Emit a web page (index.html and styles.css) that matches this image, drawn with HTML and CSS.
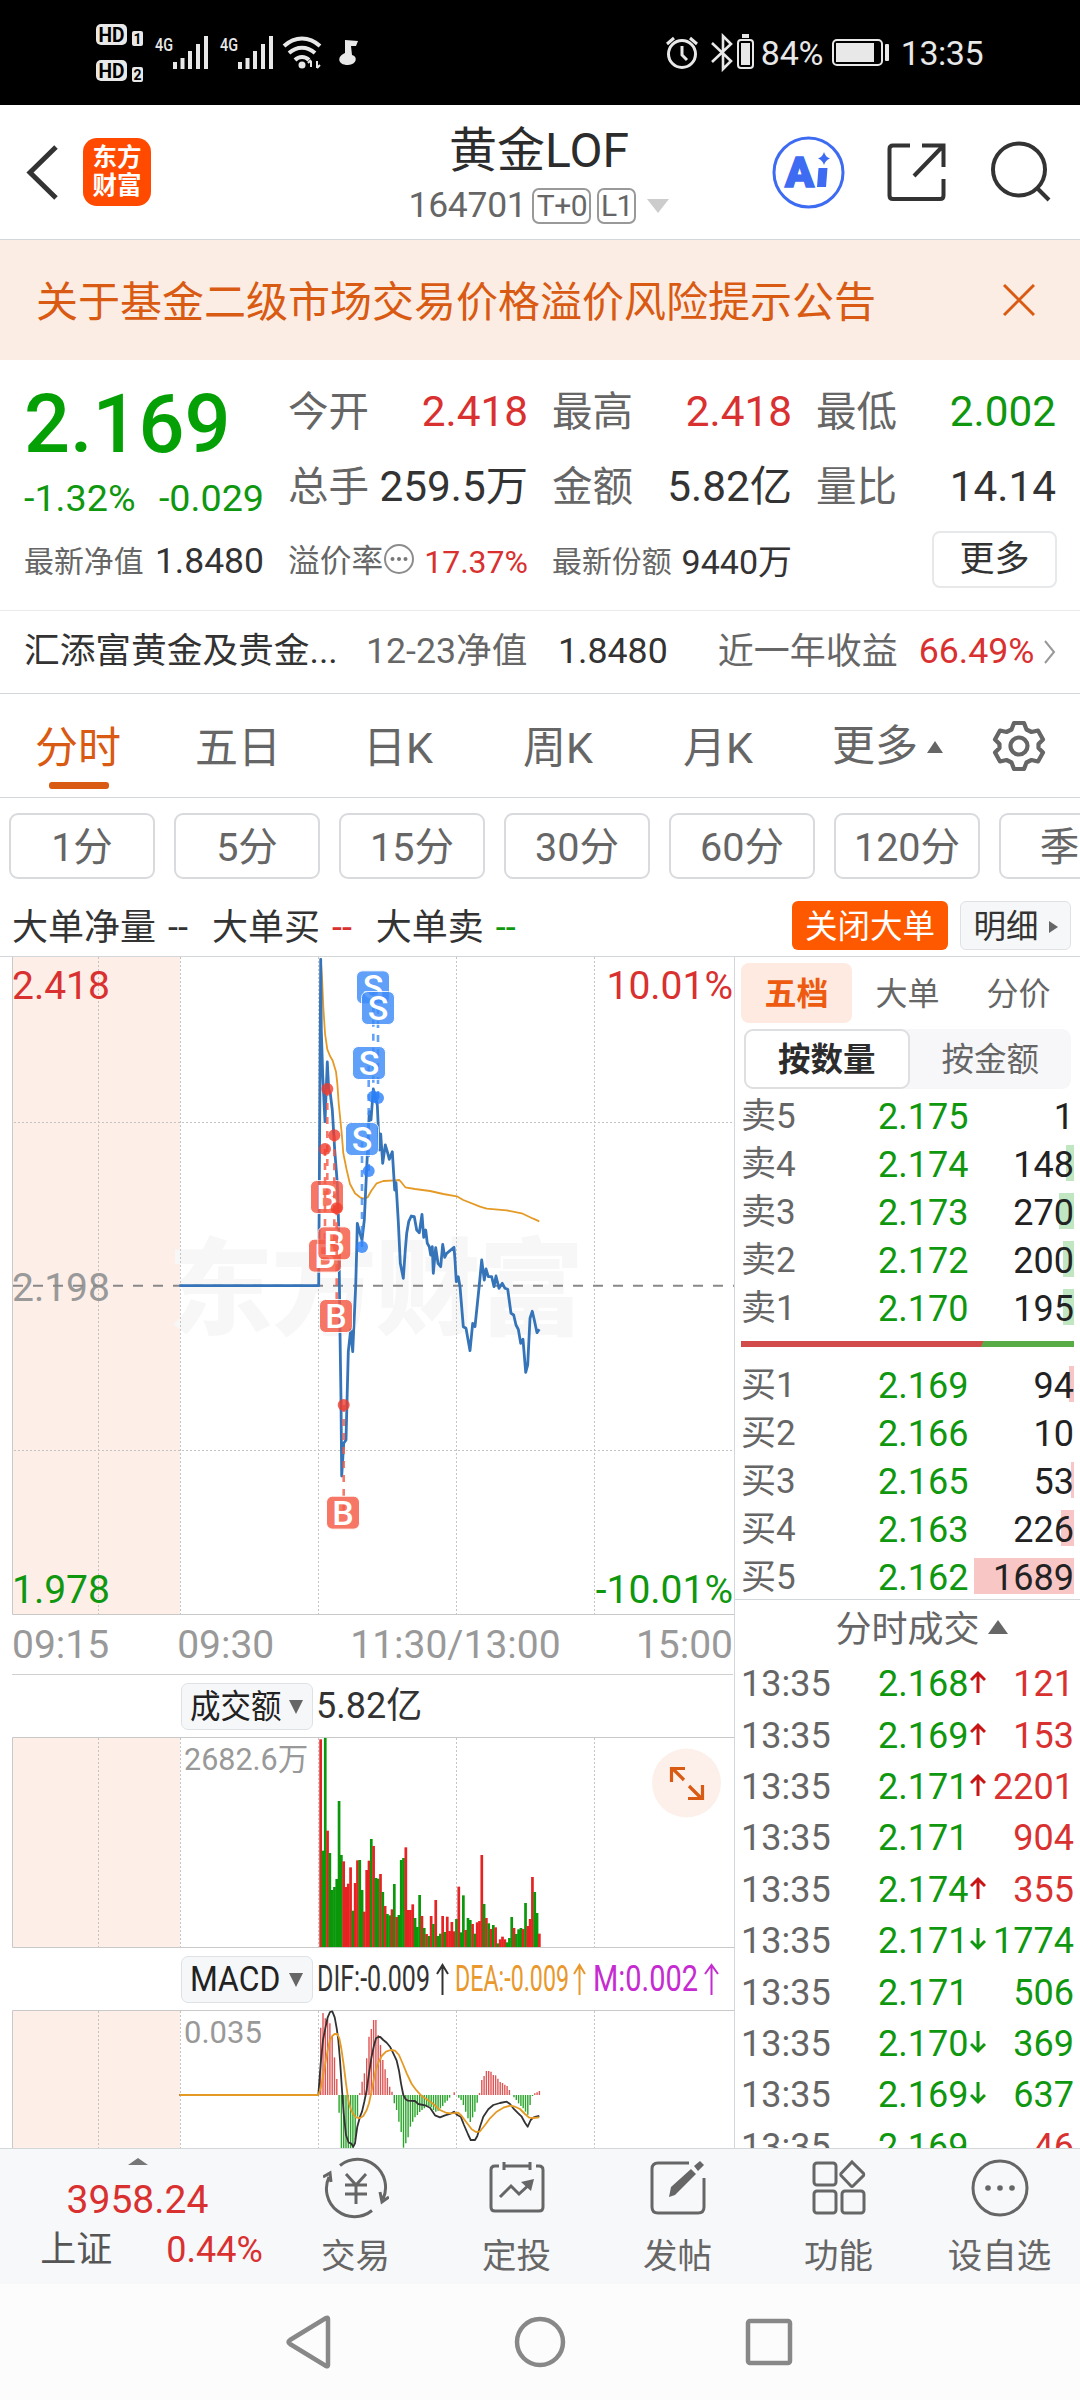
FILE: index.html
```html
<!DOCTYPE html>
<html lang="zh-CN">
<head>
<meta charset="utf-8">
<title>黄金LOF 164701</title>
<link rel="stylesheet" href="styles.css">
</head>
<body>
<div class="status">
  <svg class="status-left" width="280" height="64" viewBox="90 20 280 64">
    <g fill="#e8e8e8">
      <rect x="96" y="24" width="31" height="21" rx="5"/><rect x="96" y="60" width="31" height="21" rx="5"/>
      <rect x="132" y="31" width="11" height="15" rx="2"/><rect x="132" y="67" width="11" height="15" rx="2"/>
      <g id="sig"><rect x="173" y="62" width="4" height="7"/><rect x="180.500" y="58" width="4" height="11"/><rect x="188" y="51" width="4" height="18"/><rect x="196" y="44" width="4" height="25"/><rect x="204" y="36" width="4" height="33"/></g>
      <use href="#sig" x="65"/>
      <text x="155" y="51" font-size="19" font-weight="500" textLength="18" lengthAdjust="spacingAndGlyphs">4G</text>
      <text x="220" y="51" font-size="19" font-weight="500" textLength="18" lengthAdjust="spacingAndGlyphs">4G</text>
      <circle cx="302" cy="65" r="3.500"/>
      <path d="M311 61v6M308 63l3-3M317 61v7m0 0l3-3" stroke="#e8e8e8" stroke-width="2"/>
      <path d="M345 40l13 1-2 5h-5l1 9c6 1 5 10-4 10-11 0-11-9-3-12z"/>
    </g>
    <g font-size="20" font-weight="700" fill="#000"><text x="98.500" y="41.500" textLength="26" lengthAdjust="spacingAndGlyphs">HD</text><text x="98.500" y="77.500" textLength="26" lengthAdjust="spacingAndGlyphs">HD</text></g>
    <g font-size="14" font-weight="700" fill="#000"><text x="133.500" y="43.500">1</text><text x="133.500" y="79.500">2</text></g>
    <path d="M284 46c11-10 25-10 36 0M289 53c8-7 18-7 26 0M295 60c4-4 10-4 14 0" fill="none" stroke="#e8e8e8" stroke-width="4"/>
  </svg>
  <div class="status-right">
    <svg width="92" height="40" viewBox="664 33 92 40" fill="none" stroke="#e8e8e8" stroke-width="3">
      <circle cx="681" cy="54" r="13.500"/><path d="M681 46v9l5 5M666 44l7-6M696 44l-7-6"/>
      <path d="M711 43l19 18-8 8V36l8 8-19 18" stroke-width="2.600"/>
      <path d="M741 36h7" stroke-width="4"/><rect x="737" y="40" width="15" height="28" rx="3" stroke-width="2"/><rect x="740" y="43" width="9" height="22" fill="#e8e8e8" stroke="none"/>
    </svg>
    <span class="pct">84%</span>
    <svg width="60" height="28" viewBox="831 39 60 28"><rect x="833" y="40" width="49" height="25" rx="4" fill="none" stroke="#e8e8e8" stroke-width="2"/><rect x="836" y="43" width="38" height="19" fill="#e8e8e8"/><rect x="885" y="44" width="4" height="17" rx="1" fill="#e8e8e8"/></svg>
    <span class="clock">13:35</span>
  </div>
</div>

<header class="header">
  <div class="head-side">
    <svg width="40" height="60" viewBox="22 142 40 60" fill="none" stroke="#333" stroke-width="5"><path d="M56 147L30 172.500L56 198"/></svg>
    <div class="logo"><span>东方</span><span>财富</span></div>
  </div>
  <div class="head-title">
    <div class="name">黄金LOF</div>
    <div class="code"><span>164701</span><b class="tag">T+0</b><b class="tag level">L1</b><i class="tri-down light"></i></div>
  </div>
  <svg class="head-icons" width="286" height="76" viewBox="770 134 286 76" fill="none">
    <circle cx="808.500" cy="172.500" r="34.500" stroke="#3d6bf2" stroke-width="3"/>
    <text x="785" y="187" font-size="42" font-weight="900" fill="#3d6bf2" stroke="#3d6bf2" stroke-width="1.500" textLength="29" lengthAdjust="spacingAndGlyphs">A</text>
    <path d="M818.500 168h9l-1.500 19h-9z" fill="#3d6bf2"/><path d="M824 152q1.500 5 6 6.500q-4.500 1.500-6 6.500q-1.500-5-6-6.500q4.500-1.500 6-6.500z" fill="#3d6bf2"/>
    <g stroke="#333" stroke-width="4"><path d="M910 145.500H893Q889.500 145.500 889.500 149V195.500Q889.500 199 893 199H940Q943.500 199 943.500 195.500V179" /><path d="M914 176L943 146M922 145.500H943.500V167"/><circle cx="1019" cy="169.500" r="26"/><path d="M1037 188L1049 200"/></g>
  </svg>
</header>

<div class="notice"><span>关于基金二级市场交易价格溢价风险提示公告</span>
  <svg width="32" height="32" viewBox="0 0 32 32" stroke="#d95a12" stroke-width="3"><path d="M1 1L31 31M31 1L1 31"/></svg></div>

<section class="quote">
  <div class="q-main">
    <div class="last">2.169</div>
    <div class="change"><span>-1.32%</span><span>-0.029</span></div>
  </div>
  <div class="cell"><span>今开</span><b class="red">2.418</b></div>
  <div class="cell"><span>最高</span><b class="red">2.418</b></div>
  <div class="cell"><span>最低</span><b class="green">2.002</b></div>
  <div class="cell"><span>总手</span><b>259.5万</b></div>
  <div class="cell"><span>金额</span><b>5.82亿</b></div>
  <div class="cell"><span>量比</span><b>14.14</b></div>
  <div class="cell small"><span>最新净值</span><b>1.8480</b></div>
  <div class="cell small"><span class="rate">溢价率<svg width="32" height="32" viewBox="0 0 32 32"><circle cx="16" cy="16" r="14" fill="none" stroke="#8c8c8c" stroke-width="2"/><g fill="#777"><circle cx="9.500" cy="16" r="2"/><circle cx="16" cy="16" r="2"/><circle cx="22.500" cy="16" r="2"/></g></svg></span><b class="red prem">17.37%</b></div>
  <div class="cell small"><span>最新份额</span><b class="share">9440万</b></div>
  <div class="cell end"><button class="more">更多</button></div>
</section>

<section class="fund">
  <span class="f-name">汇添富黄金及贵金...</span><span class="f-lab">12-23净值</span><b>1.8480</b><span class="f-year">近一年收益</span><b class="red f-pct">66.49%</b>
  <svg width="14" height="26" viewBox="0 0 14 26" fill="none" stroke="#999" stroke-width="2"><path d="M2 2L11 13L2 24"/></svg>
</section>

<nav class="tabs">
  <span class="tab on">分时</span><span class="tab">五日</span><span class="tab">日K</span><span class="tab">周K</span><span class="tab">月K</span>
  <span class="tab-more">更多<i class="tri-up tiny"></i></span>
  <svg width="54" height="54" viewBox="-27 -27 54 54" fill="none" stroke="#666" stroke-width="4.200" stroke-linejoin="round"><path d="M-5 -23H5L7.500 -16.500L12.500 -14L19 -15.500L24 -6.500L19.500 -2V2L24 6.500L19 15.500L12.500 14L7.500 16.500L5 23H-5L-7.500 16.500L-12.500 14L-19 15.500L-24 6.500L-19.500 2V-2L-24 -6.500L-19 -15.500L-12.500 -14L-7.500 -16.500Z"/><circle r="8.500"/></svg>
</nav>

<div class="chips"><span>1分</span><span>5分</span><span>15分</span><span>30分</span><span>60分</span><span>120分</span><span>季K</span></div>

<div class="orders">
  <span>大单净量</span><i>--</i><span>大单买</span><i class="red">--</i><span>大单卖</span><i class="green">--</i>
  <button class="close-big">关闭大单</button><button class="detail">明细<em></em></button>
</div>

<main class="body">
  <div class="charts">
    <svg class="plot" id="price" width="734" height="658" viewBox="0 957 734 658">
      <rect x="13" y="957" width="167" height="657" fill="#fdeee8"/>
      <text x="168" y="1326" font-size="105" font-weight="900" fill="#f7f7f7" textLength="416">东方财富</text>
      <g class="grid"><path d="M98.500 957V1614M180.500 957V1614M318.500 957V1614M456.500 957V1614M594.500 957V1614M14 1122.500H733M14 1450.500H733"/></g>
      <path class="frame" d="M12.500 957V1614.500H734"/>
      <g font-size="39"><text x="12" y="1301" fill="#999">2.198</text></g>
      <path d="M13 1285.700H734" stroke="#888" stroke-width="2" stroke-dasharray="10 10"/>
      <g id="lines"></g><g id="marks"></g>
      <g font-size="39"><text x="12" y="999" fill="#d93030">2.418</text><text x="733" y="999" fill="#d93030" text-anchor="end">10.01%</text><text x="12" y="1603" fill="#0f970f">1.978</text><text x="733" y="1603" fill="#0f970f" text-anchor="end">-10.01%</text></g>
    </svg>
    <div class="axis"><span>09:15</span><span class="t2">09:30</span><span class="t3">11:30/13:00</span><span class="t4">15:00</span></div>
    <div class="sub"><button class="pick cn"><span>成交额</span><i class="tri-down"></i></button><span>5.82亿</span></div>
    <div class="vol-wrap">
      <svg class="plot" width="734" height="211" viewBox="0 1737 734 211">
        <rect x="13" y="1738" width="167" height="209" fill="#fdeee8"/>
        <g class="grid"><path d="M98.500 1738V1947M180.500 1738V1947M318.500 1738V1947M456.500 1738V1947M594.500 1738V1947"/></g>
        <text x="184" y="1770" font-size="30.500" fill="#999">2682.6万</text>
        <path class="frame" d="M734 1737.500H12.500V1947.500H734"/>
        <g id="vol"></g>
        <circle cx="686.500" cy="1783" r="34.500" fill="#fdf0ea"/>
        <path d="M684 1780L672 1768M671.500 1782V1768.500H685M689 1786L701 1798M702.500 1785V1798.500H688" fill="none" stroke="#d95a12" stroke-width="3.200"/>
      </svg>
    </div>
    <div class="sub"><button class="pick"><span>MACD</span><i class="tri-down"></i></button>
      <svg class="plot" width="416" height="62" viewBox="318 1948 416 62" font-size="36">
        <text x="317" y="1991" fill="#333" textLength="113" lengthAdjust="spacingAndGlyphs">DIF:-0.009</text>
        <text x="455" y="1991" fill="#e8982c" textLength="114" lengthAdjust="spacingAndGlyphs">DEA:-0.009</text>
        <text x="593" y="1991" fill="#c52bd0" textLength="105" lengthAdjust="spacingAndGlyphs">M:0.002</text>
        <g fill="none" stroke-width="2"><path d="M442.500 1995V1966M437 1974L442.500 1965L448 1974" stroke="#333"/><path d="M579.500 1995V1966M574 1974L579.500 1965L585 1974" stroke="#e8982c"/><path d="M711.500 1995V1966M705 1974L711.500 1965L718 1974" stroke="#c52bd0"/></g>
      </svg></div>
    <svg class="plot" width="734" height="138" viewBox="0 2010 734 138">
      <rect x="13" y="2011" width="167" height="140" fill="#fdeee8"/>
      <g class="grid"><path d="M98.500 2011V2150M180.500 2011V2150M318.500 2011V2150M456.500 2011V2150M594.500 2011V2150"/></g>
      <text x="184" y="2043" font-size="31" fill="#999">0.035</text>
      <path class="frame" d="M734 2010.500H12.500V2150"/>
      <g id="macd"></g>
    </svg>
  </div>

  <aside class="side">
    <div class="s-tabs"><span class="on">五档</span><span>大单</span><span>分价</span></div>
    <div class="toggle"><span class="on">按数量</span><span>按金额</span></div>
    <div class="book sell">
      <div><span>卖5</span><b>2.175</b><i>1</i></div>
      <div><span>卖4</span><b>2.174</b><i>148<u style="width:8px"></u></i></div>
      <div><span>卖3</span><b>2.173</b><i>270<u style="width:15px"></u></i></div>
      <div><span>卖2</span><b>2.172</b><i>200<u style="width:11px"></u></i></div>
      <div><span>卖1</span><b>2.170</b><i>195<u style="width:11px"></u></i></div>
    </div>
    <div class="ratio"></div>
    <div class="book buy">
      <div><span>买1</span><b>2.169</b><i>94<u style="width:5px"></u></i></div>
      <div><span>买2</span><b>2.166</b><i>10</i></div>
      <div><span>买3</span><b>2.165</b><i>53<u style="width:3px"></u></i></div>
      <div><span>买4</span><b>2.163</b><i>226<u style="width:13px"></u></i></div>
      <div><span>买5</span><b>2.162</b><i>1689<u style="width:100px"></u></i></div>
    </div>
    <div class="ticks-head">分时成交<i class="tri-up"></i></div>
    <div class="ticks" id="ticks"></div>
  </aside>
</main>

<footer class="bar">
  <div class="index"><i class="tri-up tiny gray"></i><b>3958.24</b><div><span>上证</span><b class="p">0.44%</b></div></div>
  <div class="act"><svg width="66" height="62" viewBox="-33 -31 66 62"><path d="M-16 -22.500A28 28 0 0 1 27 11M16 22.500A28 28 0 0 1 -27 -11M-33 -11L-26 -15L-25 -6M33 9L26 14L24 4M-10 -14L0 -3L10 -14M0 -3V16M-11 -3H11M-11 6H11"/></svg><span>交易</span></div>
  <div class="act"><svg width="66" height="62" viewBox="-33 -31 66 62"><path d="M-18 -22H-22Q-26 -22 -26 -18V19Q-26 23 -22 23H22Q26 23 26 19V-18Q26 -22 22 -22H19M-13 -26V-18M13 -26V-18M-13 -22H13M-17 9L-6 -2L2 6L14 -5"/><path d="M4 -6L17 -9L14 3Z" fill="#666" stroke="none"/></svg><span>定投</span></div>
  <div class="act"><svg width="66" height="62" viewBox="-33 -31 66 62"><path d="M11 -25H-20Q-26 -25 -26 -19V19Q-26 25 -20 25H20Q26 25 26 19V-10"/><path d="M-9 9L-7 -1L13 -19L18 -14L-3 7ZM16 -22L22 -27L26 -23L20 -17Z" fill="#666" stroke="none"/></svg><span>发帖</span></div>
  <div class="act"><svg width="66" height="62" viewBox="-33 -31 66 62"><rect x="-25" y="-25" width="22" height="22" rx="3"/><rect x="-25" y="3" width="22" height="22" rx="3"/><rect x="3" y="3" width="22" height="22" rx="3"/><path d="M13 -26L24.500 -14.500Q25 -13.500 24.500 -12.500L14 -2Q13 -1 12 -2L2 -12.500Q1.500 -13.500 2 -14.500Z"/></svg><span>功能</span></div>
  <div class="act"><svg width="66" height="62" viewBox="-33 -31 66 62"><circle r="27"/><g fill="#666" stroke="none"><circle cx="-12" r="2.800"/><circle r="2.800"/><circle cx="12" r="2.800"/></g></svg><span>设自选</span></div>
</footer>
<div class="sysnav">
  <svg width="56" height="56" viewBox="0 0 56 56"><path d="M45 5V51Q45 53 43 52L7 30Q4 28 7 26L43 4Q45 3 45 5Z"/></svg>
  <svg width="56" height="56" viewBox="0 0 56 56"><circle cx="28" cy="28" r="23"/></svg>
  <svg width="56" height="56" viewBox="0 0 56 56"><rect x="7" y="7" width="42" height="42" rx="2"/></svg>
</div>
<script src="chart.js"></script>
</body>
</html>
```
FILE: styles.css
```css
* { box-sizing: border-box; }
body { margin: 0; width: 1080px; height: 2400px; overflow: hidden; background: #fff; color: #333; font-family: Roboto, "Noto Sans CJK SC", sans-serif; line-height: 1; }
b, i, em { font-weight: 400; font-style: normal; }
u { text-decoration: none; }
span, b { white-space: nowrap; }
button { font: inherit; margin: 0; padding: 0; color: inherit; display: flex; align-items: center; justify-content: center; }
svg { display: block; flex: none; }
.red { color: #d93030; }
.green { color: #0f970f; }
.tri-down { width: 0; height: 0; border: 7px solid transparent; border-top: 12px solid #666; border-bottom: 0; }
.tri-down.light { border-width: 14px 11px 0; border-top-color: #ccc; }
.tri-up { width: 0; height: 0; border: 10.500px solid transparent; border-bottom: 14px solid #666; border-top: 0; }
.tri-up.tiny { border-width: 0 8px 12px; }

.status { height: 105px; background: #000; color: #e8e8e8; display: flex; justify-content: space-between; padding: 20px 97px 0 90px; }
.status-right { display: flex; height: 66px; align-items: center; font-size: 34px; }
.pct { width: 63px; margin: 0 7px 0 4px; letter-spacing: -0.300px; }
.clock { margin-left: 10px; letter-spacing: -0.500px; }

.header { height: 135px; border-bottom: 1px solid #d4d7da; display: flex; justify-content: space-between; padding: 0 24px 0 22px; }
.head-side { width: 286px; display: flex; gap: 21px; padding-top: 33px; align-items: flex-start; }
.head-side svg { margin-top: 4px; }
.logo { width: 68px; height: 68px; border-radius: 14px; background: #ff4a00; color: #fff; font-size: 24.500px; font-weight: 700; display: flex; flex-direction: column; align-items: center; justify-content: center; gap: 4px; }
.head-title { display: flex; flex-direction: column; align-items: center; padding-top: 22px; }
.name { font-size: 48px; color: #2c2c2c; }
.code { display: flex; align-items: center; font-size: 35.500px; color: #666; margin-top: 13px; height: 36px; letter-spacing: -0.300px; }
.tag { border: 2px solid #999; border-radius: 7px; font-size: 30px; height: 36px; width: 59px; margin-left: 6px; display: flex; align-items: center; justify-content: center; letter-spacing: -0.500px; }
.tag.level { width: 39px; }
.code i { margin-left: 11px; }
.head-icons { margin-top: 29px; }

.notice { height: 120px; background: #fcede4; color: #d95a12; display: flex; align-items: center; justify-content: space-between; padding: 0 45px 0 36px; font-size: 42px; }
.notice span { padding-top: 5px; }

.quote { height: 251px; border-bottom: 1px solid #e8eaec; padding: 13px 0 0 24px; display: grid; grid-template: repeat(3, 75px) / 240px 240px 240px 240px; column-gap: 24px; }
.q-main { grid-row: span 2; color: #0f970f; }
.last { height: 99px; line-height: 104px; font-size: 81px; font-weight: 500; color: #05a005; }
.change { display: flex; justify-content: space-between; font-size: 37.700px; line-height: 52px; }
.cell { display: flex; justify-content: space-between; align-items: center; font-size: 42.300px; padding-top: 3px; }
.cell span { color: #666; font-size: 40.500px; }
.cell.small { font-size: 35.500px; padding-top: 2px; }
.cell.small span { font-size: 29.900px; }
.cell.small .rate { display: flex; align-items: center; font-size: 31.700px; }
.rate svg { margin-top: -4px; }
.cell .prem { font-size: 32px; }
.cell .share { font-size: 34px; }
.end { justify-content: flex-end; padding-top: 0; }
.more { width: 125px; height: 57px; border: 2px solid #e6e8ea; border-radius: 8px; background: #fff; font-size: 35px; margin-top: -3px; margin-right: -1px; }

.fund { height: 83px; border-bottom: 1px solid #d4d7da; display: flex; align-items: center; padding: 0 23px 0 24px; font-size: 35.700px; }
.f-name { width: 342px; }
.f-lab { width: 192px; color: #666; }
.f-year { color: #666; margin-left: 50px; font-size: 36px; }
.f-pct { margin-left: 21px; flex: 1; }

.tabs { height: 104px; border-bottom: 1px solid #d4d7da; display: flex; align-items: center; font-size: 43px; color: #666; }
.tab { width: 160px; text-align: center; padding-top: 2px; height: 100%; line-height: 104px; }
.tab:first-child { margin-left: -2px; }
.tab.on { color: #d95a12; position: relative; }
.tab.on::after { content: ""; position: absolute; left: 51px; bottom: 8px; width: 60px; height: 7px; border-radius: 3px; background: #d95a12; }
.tab-more { display: flex; align-items: center; gap: 9px; width: 160px; margin-left: 34px; padding-top: 2px; }

.chips { display: flex; gap: 19px; padding: 15px 0 0 9px; height: 82px; font-size: 39.500px; color: #666; overflow: hidden; }
.chips span { flex: 0 0 146px; height: 66px; border: 2px solid #d8dadd; border-radius: 9px; display: flex; align-items: center; justify-content: center; padding-top: 3px; }

.orders { height: 76px; display: flex; align-items: center; padding: 15px 9px 0 12px; font-size: 36px; color: #333; }
.orders span, .orders i { padding-top: 4px; }
.orders i { margin: 0 24px 0 12px; }
.orders button { height: 49px; font-size: 32.500px; border-radius: 6px; border: 0; padding-top: 3px; }
.orders .close-big { width: 156px; background: #ff5900; color: #fff; margin-left: auto; }
.orders .detail { width: 111px; background: #f6f7f9; border: 1px solid #dfe2e5; margin-left: 12px; gap: 10px; }
.detail em { width: 0; border: 6px solid transparent; border-left: 9px solid #666; border-right: 0; }

.body { height: 1192px; border-top: 1px solid #d4d7da; display: grid; grid-template-columns: 734px 346px; overflow: hidden; }
.plot { font-family: Roboto, "Noto Sans CJK SC", sans-serif; }
.grid path { fill: none; stroke: #c4c4c4; stroke-width: 1; stroke-dasharray: 2 2; }
.frame { fill: none; stroke: #c9c9c9; }
.axis { height: 60px; width: 721px; margin-left: 12px; padding-top: 2px; border-bottom: 1px solid #d0d0d0; display: flex; align-items: center; font-size: 39px; color: #999; }
.t2 { margin-left: 68px; }
.t3 { margin-left: 76px; }
.t4 { margin-left: auto; }
.sub { height: 62px; display: flex; align-items: center; padding-left: 181px; font-size: 36px; }
.pick { width: 132px; height: 47px; background: #f6f7f9; border: 1px solid #dfe2e5; border-radius: 7px; font-size: 35px; color: #222; justify-content: space-between; padding: 1px 9px 0 8px; }
.pick span { width: 92px; transform: scaleX(0.91); transform-origin: left; }
.pick .tri-down { border-top-width: 14px; }
.pick + span { margin-left: 3px; }
.pick + svg { margin-left: 5px; }
.pick.cn span { font-size: 33.500px; }

.side { border-left: 1px solid #d4d7da; padding: 6px 6px 0 6px; }
.s-tabs { display: flex; height: 60px; font-size: 32px; color: #666; }
.s-tabs span { width: 111px; display: flex; align-items: center; justify-content: center; padding-top: 2px; }
.s-tabs .on { background: #feeae0; color: #ee5a10; font-weight: 700; border-radius: 8px; }
.toggle { display: flex; margin: 6px 3px 0; height: 60px; background: #f7f7fa; border-radius: 9px; font-size: 32.500px; color: #666; width: 327px; }
.toggle span { flex: 1; display: flex; align-items: center; justify-content: center; padding-top: 3px; }
.toggle .on { background: #fff; border: 2px solid #dedfe1; border-radius: 9px; color: #2c2c2c; font-weight: 700; }
.book { font-size: 36px; }
.sell { padding-top: 3px; }
.book div { display: flex; height: 48px; align-items: center; width: 333px; padding-top: 1px; }
.book span { width: 137px; color: #666; font-size: 35px; }
.book b { color: #0f970f; }
.book i { flex: 1; text-align: right; position: relative; color: #222; }
.book u { position: absolute; right: 0; top: -2px; height: 36px; z-index: -1; background: #c0e6c2; }
.buy u { background: #f9c6c6; }
.ratio { height: 6px; width: 333px; margin: 9px 0 14px; background: linear-gradient(115deg, #d24b4b 0 72.200%, #58ac45 72.300%); }
.ticks-head { height: 59px; margin: -2px -6px 0; border-top: 1px solid #d4d7da; padding: 1px 0 0 28px; display: flex; align-items: center; justify-content: center; gap: 8px; font-size: 36px; color: #666; }
.ticks-head i { margin-top: -6px; }
.ticks div { display: flex; align-items: center; height: 51.400px; font-size: 36px; width: 333px; padding-top: 1px; }
.ticks span { width: 137px; color: #666; }
.ticks b { color: #0f970f; }
.ticks svg { margin: -4px 0 0 2px; }
.ticks i { margin-left: auto; }

.bar { height: 136px; background: #f7f8fa; border-top: 1px solid #d4d7da; display: flex; color: #666; font-size: 34.500px; }
.index { width: 275px; display: flex; flex-direction: column; align-items: center; padding-top: 9px; color: #d93030; }
.index > b { font-size: 39px; margin: 16px 0 0; }
.index div { display: flex; gap: 54px; margin-top: 12px; color: #555; font-size: 36px; margin-left: 28px; }
.index .p { color: #d93030; }
.index .gray { border-width: 0 10px 7px; border-bottom-color: #777; }
.act { width: 161px; display: flex; flex-direction: column; align-items: center; padding-top: 8px; gap: 20px; }
.act svg { fill: none; stroke: #666; stroke-width: 3; }
.sysnav { height: 116px; background: #fcfcfc; display: flex; gap: 173px; justify-content: center; align-items: center; }
.sysnav svg { fill: none; stroke: #888; stroke-width: 4.500; }
```
FILE: chart.js
```js
// Plot points are stored on a grid of one third of a pixel, from x = 300.
const X = v => (300 + v / 3).toFixed(1);
const line = (pts, top, color, w) => {
  const n = pts.trim().split(/\s+/).map(p => p.split(',').map(Number));
  return `<polyline fill="none" stroke="${color}" stroke-width="${w}" stroke-linejoin="round" points="${n.map(p => X(p[0]) + ',' + (top + p[1] / 3).toFixed(1)).join(' ')}"/>`;
};
const put = (id, html) => { document.getElementById(id).innerHTML = html; };

const avg = '62,25 66,80 70,170 75,250 82,298 90,318 98,332 108,365 112,400 116,460 125,550 130,610 140,660 150,702 165,730 180,742 190,746 203,742 214,722 230,700 250,693 285,691 298,690 305,698 316,712 345,717 390,723 430,732 470,739 490,750 540,770 560,776 620,781 665,790 700,806 718,814';
const price = '-362,1007 56,1007 62,28 64,240 68,375 75,515 82,336 86,420 91,430 97,480 104,600 112,700 116,830 118,970 120,1150 123,1350 125,1578 131,1480 138,1470 142,1320 145,1205 152,1140 158,1205 163,1100 167,1007 170,900 172,820 180,850 186,870 193,810 198,700 203,590 208,485 213,510 220,417 226,440 232,465 238,600 242,552 248,640 256,585 262,605 268,628 277,605 284,720 288,698 295,815 301,940 310,985 316,900 320,850 326,815 334,798 343,800 350,840 358,848 366,793 371,862 377,840 382,880 388,890 392,915 397,890 400,970 407,893 414,940 422,950 428,883 434,922 440,910 462,892 465,930 469,995 475,980 480,1010 490,1130 498,1135 510,1202 518,1120 525,1130 538,1005 545,930 553,990 558,957 565,980 575,980 582,1010 588,978 597,1015 607,1000 615,1015 623,1018 633,1090 641,1095 648,1125 655,1138 662,1180 669,1168 677,1267 683,1245 690,1105 697,1084 703,1110 711,1148 718,1138';
put('lines', line(avg, 950, '#e59a26', 1.8) + line(price, 950, '#3574b8', 2.8));

// letter, badge centre x/y, dot x/y
const marks = [
  ['B', 81, 741, 82, 417], ['B', 75, 917, 75, 597], ['B', 103, 880, 103, 556], ['B', 108, 1098, 110, 775], ['B', 129, 1688, 131, 1365],
  ['S', 219, 112, 220, 440], ['S', 234, 174, 234, 444], ['S', 207, 339, 206, 663], ['S', 186, 567, 186, 891]
];
put('marks', marks.map(([t, x, y, dx, dy]) => {
  const c = t === 'B' ? '#f55a45' : '#3e8cf8';
  const dot = t === 'B' ? '#f03c2d' : '#2a80f8';
  const py = v => 950 + v / 3;
  return `<path d="M${X(dx)} ${py(dy)}V${py(y)}" stroke="${c}" stroke-width="2.6" stroke-dasharray="7 7" opacity=".8"/>
    <circle cx="${X(dx)}" cy="${py(dy)}" r="6" fill="${dot}" opacity=".8"/>
    <rect x="${+X(x) - 16.5}" y="${py(y) - 16.5}" width="33" height="33" rx="6" fill="${c}" stroke="#fff" stroke-width="1" opacity=".82"/>
    <text x="${X(x)}" y="${py(y) + 12}" font-size="34" font-weight="500" fill="#fff" text-anchor="middle">${t}</text>`;
}).join(''));

const vol = '28R 362G 24G 302R 369G 480G 471G 447G 213G 375G 394R 471R 461R 412R 542G 459R 391R 390G 480G 545R 420R 392R 327G 348R 444G 446G 432R 486G 528R 552G 556G 538R 462G 561R 555G 390G 384G 352R 540R 540R 523R 564G 591G 495G 558R 594G 612R 618G 558R 582G 510R 618G 611G 558R 606G 560R 603R 576R 604R 567G 470R 607G 496G 600R 564G 570G 582R 611G 577R 573R 375R 522G 564R 580G 597R 585G 592R 640G 628R 620R 628R 637G 624G 561G 594R 612G 598G 594G 597R 519G 588R 567R 441R 486G 549G 611R';
put('vol', vol.split(' ').map((v, i) => {
  const y = 1730 + parseInt(v) / 3;
  return `<rect x="${319.3 + i * 2.302}" y="${y}" width="2.7" height="${1947 - y}" fill="${v.endsWith('R') ? '#e62222' : '#0a980a'}"/>`;
}).join(''));

const hist = [893,849,865,868,880,918,982,1047,1148,1254,1254,1254,1254,1254,1254,1230,1160,1089,1055,1030,985,920,897,870,870,915,945,990,1018,1044,1070,1085,1120,1140,1175,1206,1253,1240,1222,1190,1175,1162,1155,1146,1140,1135,1130,1128,1132,1140,1145,1142,1135,1128,1118,1112,1103,1095,1087,1095,1103,1110,1125,1145,1165,1176,1162,1145,1118,1089,1050,1038,1023,1023,1025,1035,1036,1046,1056,1059,1064,1068,1080,1095,1102,1110,1120,1128,1135,1145,1154,1125,1098,1090,1087,1083];
const dif = '-362,1095 55,1095 62,1000 69,930 76,895 83,862 90,846 97,844 104,862 110,895 115,930 120,990 126,1080 131,1150 138,1215 146,1238 153,1240 160,1250 165,1240 172,1190 180,1160 186,1145 193,1115 200,1080 207,1030 214,985 221,950 228,925 235,921 241,921 250,930 260,938 270,950 280,970 290,992 297,1022 303,1060 310,1095 317,1108 324,1112 345,1113 355,1122 375,1126 390,1133 398,1145 405,1156 420,1162 435,1156 450,1152 462,1145 472,1155 482,1160 492,1185 505,1215 512,1230 525,1230 532,1218 540,1190 550,1160 565,1138 580,1125 600,1119 620,1115 630,1122 640,1135 655,1150 665,1160 675,1178 683,1190 692,1170 700,1163 708,1160 718,1158';
const dea = '-362,1095 55,1095 62,1075 69,1040 76,1000 83,960 90,930 97,918 104,912 112,912 118,925 124,955 131,1005 138,1060 145,1110 152,1138 160,1152 168,1162 180,1164 190,1158 200,1140 207,1120 214,1088 221,1050 228,1018 235,998 245,978 258,965 272,960 285,962 297,975 310,1005 320,1030 335,1062 350,1082 365,1098 380,1108 400,1122 420,1140 440,1149 455,1150 475,1148 485,1158 500,1178 515,1198 528,1206 540,1204 555,1185 570,1165 590,1145 610,1133 630,1127 645,1130 660,1137 675,1152 688,1163 700,1164 718,1162';
put('macd', hist.map((v, i) => `<path d="M${X(62 + i * 6.906)} 2095V${1730 + v / 3}" stroke="${v < 1095 ? '#dd5555' : '#2ba42b'}" stroke-width="1.4"/>`).join('')
  + line(dif, 1730, '#333', 1.8) + line(dea, 1730, '#e59a26', 1.8));

const ticks = [['2.168', 'u', 121, 'red'], ['2.169', 'u', 153, 'red'], ['2.171', 'u', 2201, 'red'], ['2.171', '', 904, 'red'], ['2.174', 'u', 355, 'red'], ['2.171', 'd', 1774, 'green'], ['2.171', '', 506, 'green'], ['2.170', 'd', 369, 'green'], ['2.169', 'd', 637, 'green'], ['2.169', '', 46, 'red']];
const arrows = {
  u: '<svg width="16" height="24" viewBox="0 0 16 24" fill="none" stroke="#c81414" stroke-width="3"><path d="M8 23V3M1 10L8 3L15 10"/></svg>',
  d: '<svg width="16" height="24" viewBox="0 0 16 24" fill="none" stroke="#0f970f" stroke-width="3"><path d="M8 1V21M1 14L8 21L15 14"/></svg>',
  '': ''
};
put('ticks', ticks.map(([p, a, v, c]) => `<div><span>13:35</span><b>${p}</b>${arrows[a]}<i class="${c}">${v}</i></div>`).join(''));
```
